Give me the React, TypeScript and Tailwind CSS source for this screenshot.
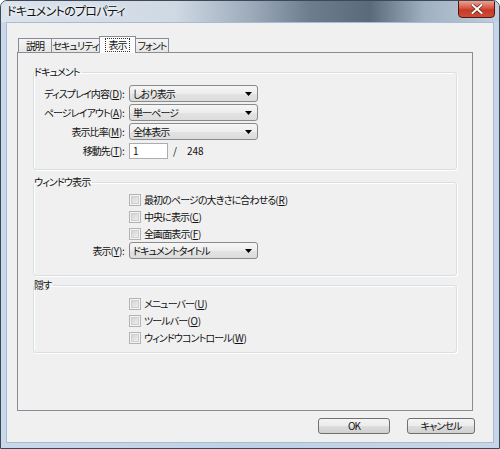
import React from "react";

const Key = ({ k }: { k: string }) => (
  <span className="tracking-[-0.2px]">
    (<span className="underline underline-offset-[1px]">{k}</span>)
  </span>
);

const Arrow = () => (
  <svg width="7" height="4" viewBox="0 0 7 4" className="shrink-0">
    <path d="M0 0h7L3.5 4z" fill="#000" />
  </svg>
);

const Select = ({ value }: { value: string }) => (
  <div className="w-[129px] h-[17px] rounded-[3px] border border-[#8a8a8a] bg-[linear-gradient(#f6f6f6,#ededed_50%,#e3e3e3_51%,#dcdcdc)] flex items-center pl-[3px] pr-[5px]">
    <span className="flex-1 leading-none">{value}</span>
    <Arrow />
  </div>
);

const Check = ({ children }: { children: React.ReactNode }) => (
  <div className="h-[17px] flex items-center pl-[95px] gap-[3px]">
    <span className="w-[12px] h-[12px] border border-[#b3b3b3] bg-[#f4f4f4] p-[1px]">
      <span className="block w-full h-full border border-[#cfcfcf] bg-[linear-gradient(135deg,#d4d4d4,#eeeeee)]" />
    </span>
    <span className="leading-none">{children}</span>
  </div>
);

const Group = ({ title, className, children }: { title: string; className: string; children: React.ReactNode }) => (
  <fieldset className={`mx-[15px] border border-[#d5dfe5] rounded-[3px] shadow-[inset_1px_1px_0_#fff,1px_1px_0_#fff] ${className}`}>
    <legend className="leading-[16px] pr-[2px]">{title}</legend>
    {children}
  </fieldset>
);

const Tab = ({ label, w, active }: { label: string; w: string; active?: boolean }) =>
  active ? (
    <div className={`${w} h-[17px] -ml-px relative z-20 border border-b-0 border-[#898c95] bg-[#fcfcfc] flex items-center justify-center whitespace-nowrap`}>
      <span className="outline-1 outline-dotted outline-[#333] px-[2px] leading-[12px]">{label}</span>
    </div>
  ) : (
    <div className={`${w} h-[15px] -ml-px border border-[#898c95] bg-[linear-gradient(#f4f4f4,#e6e6e6)] flex items-center justify-center leading-none whitespace-nowrap`}>
      {label}
    </div>
  );

const Button = ({ label, w }: { label: string; w: string }) => (
  <div className={`${w} h-[16px] rounded-[3px] border border-[#707070] bg-[linear-gradient(#f4f4f4,#ebebeb_50%,#dddddd_51%,#d0d0d0)] flex items-center justify-center leading-none`}>
    {label}
  </div>
);

export default function App() {
  return (
    <div className="w-[500px] h-[449px] flex flex-col border border-[#3d4957] rounded-t-[7px] overflow-hidden bg-[linear-gradient(90deg,#c9d9ea,#bfd1e5_50%,#c6d6e7)] text-[10px] text-[#111] tracking-[-0.9px] font-['Noto_Sans_CJK_JP','Noto_Sans',sans-serif] [font-feature-settings:'palt']">
      {/* title bar */}
      <div className="h-[21px] flex items-start shrink-0 bg-[linear-gradient(90deg,#dbe3ec_0%,#cfd9e4_35%,#9dabbb_50%,#6e7d8d_62%,#5b6a7a_74%,#9fb0c1_85%,#c2cfdc_100%)]">
        <span className="pl-[6px] pt-[3px] text-[12px] leading-[14px] tracking-[-0.7px] [text-shadow:0_0_6px_#fff,0_0_3px_#fff]">
          ドキュメントのプロパティ
        </span>
        <div className="ml-auto mr-[4px] w-[37px] h-[18px] -mt-px rounded-b-[4px] border border-[#4b1a14] bg-[linear-gradient(#eba091,#d9553f_45%,#c43a26_55%,#cf4c36)] flex items-center justify-center">
          <svg width="12" height="10" viewBox="0 0 12 10">
            <path d="M1.5 1l9 8M10.5 1l-9 8" stroke="#5a2a22" strokeWidth="3.4" strokeLinecap="square" />
            <path d="M1.5 1l9 8M10.5 1l-9 8" stroke="#fff" strokeWidth="2" strokeLinecap="square" />
          </svg>
        </div>
      </div>

      {/* client area */}
      <div className="mx-[5px] mb-[5px] h-[421px] border border-[#a8bcd1] bg-[#f0f0f0] flex flex-col">
        <div className="pt-[13px] pl-[12px] flex items-end relative z-10 -mb-px h-[30px]">
          <Tab label="説明" w="w-[34px]" />
          <Tab label="セキュリティ" w="w-[49px]" />
          <Tab label="表示" w="w-[37px]" active />
          <Tab label="フォント" w="w-[34px]" />
        </div>

        <div className="ml-[10px] w-[456px] h-[359px] border border-[#898c95] bg-[#f0f0f0] flex flex-col">
          <Group title="ドキュメント" className="mt-[11px] pt-[4px] pb-[9px]">
            <div className="grid grid-cols-[90px_auto] gap-x-[5px] items-center auto-rows-[19px]">
              <span className="text-right whitespace-nowrap">ディスプレイ内容<Key k="D" />:</span>
              <Select value="しおり表示" />
              <span className="text-right whitespace-nowrap">ページレイアウト<Key k="A" />:</span>
              <Select value="単一ページ" />
              <span className="text-right whitespace-nowrap">表示比率<Key k="M" />:</span>
              <Select value="全体表示" />
              <span className="text-right whitespace-nowrap">移動先<Key k="T" />:</span>
              <div className="flex items-center tracking-normal">
                <div className="w-[39px] h-[16px] border border-[#abadb3] bg-white flex items-center pl-[3px] leading-none">1</div>
                <span className="ml-[5px]">/</span>
                <span className="ml-[10px]">248</span>
              </div>
            </div>
          </Group>

          <Group title="ウィンドウ表示" className="mt-[4px] pt-[1px] pb-[16px]">
            <Check>最初のページの大きさに合わせる<Key k="R" /></Check>
            <Check>中央に表示<Key k="C" /></Check>
            <Check>全画面表示<Key k="F" /></Check>
            <div className="grid grid-cols-[90px_auto] gap-x-[5px] items-center h-[17px]">
              <span className="text-right">表示<Key k="Y" />:</span>
              <Select value="ドキュメントタイトル" />
            </div>
          </Group>

          <Group title="隠す" className="mt-[1px] pt-[2px] pb-[6px]">
            <Check>メニューバー<Key k="U" /></Check>
            <Check>ツールバー<Key k="O" /></Check>
            <Check>ウィンドウコントロール<Key k="W" /></Check>
          </Group>
        </div>

        <div className="mt-[7px] pr-[18px] flex justify-end gap-[17px]">
          <Button label="OK" w="w-[72px]" />
          <Button label="キャンセル" w="w-[68px]" />
        </div>
      </div>
    </div>
  );
}
